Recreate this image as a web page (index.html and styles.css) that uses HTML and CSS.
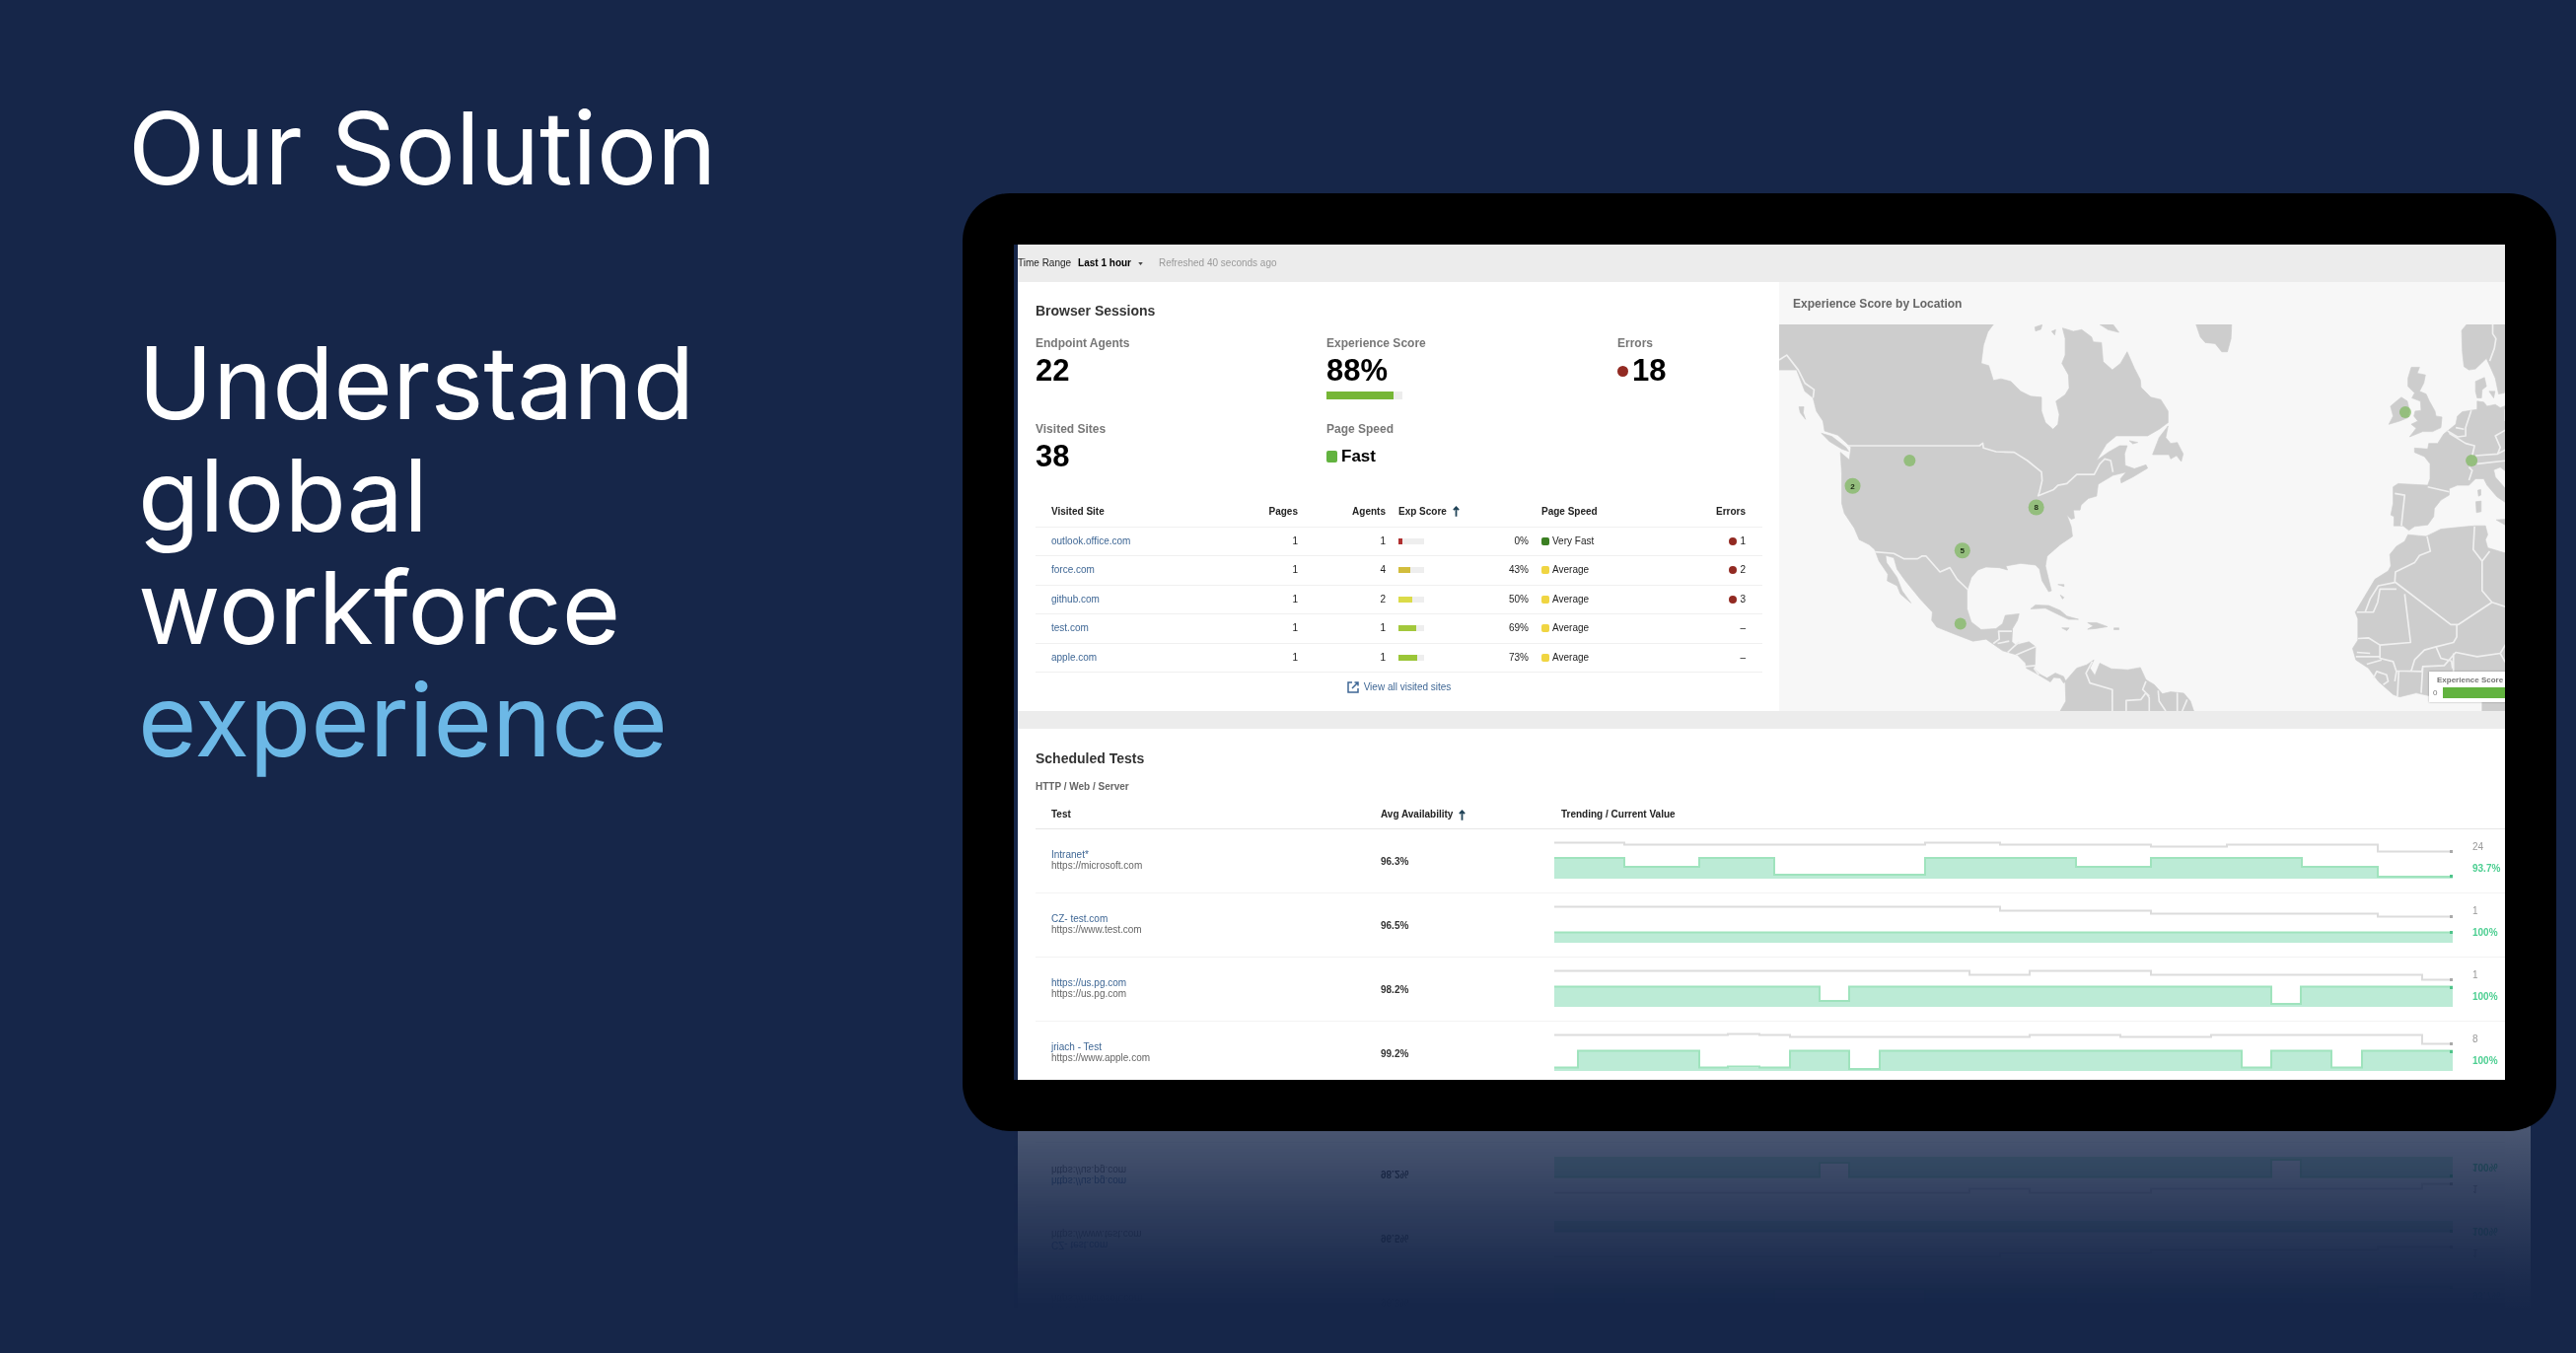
FILE: index.html
```html
<!DOCTYPE html>
<html lang="en">
<head>
<meta charset="utf-8">
<title>Our Solution</title>
<meta name="viewport" content="width=device-width, initial-scale=1">
<link rel="stylesheet" href="styles.css">
</head>
<body>
<main class="slide">
  <section class="pitch">
    <h1 class="pitch-title">Our Solution</h1>
    <p class="pitch-text">Understand<br>global<br>workforce<br><em class="pitch-accent">experience</em></p>
  </section>

  <div class="device">
    <div class="screen">
      <header class="toolbar">
        <button class="range" type="button"><span>Time Range</span> <b>Last 1 hour</b>
          <svg class="caret" viewBox="0 0 6 4" aria-hidden="true"><path d="M0 0h6L3 4z"/></svg>
        </button>
        <span class="refreshed">Refreshed 40 seconds ago</span>
      </header>

      <div class="overview">
        <section class="sessions">
          <h2 class="heading">Browser Sessions</h2>
          <dl class="stats">
            <div><dt>Endpoint Agents</dt><dd>22</dd></div>
            <div><dt>Experience Score</dt><dd>88%<span class="score"><span class="score-fill" style="width:88%"></span></span></dd></div>
            <div><dt>Errors</dt><dd class="with-mark"><i class="dot"></i>18</dd></div>
            <div><dt>Visited Sites</dt><dd>38</dd></div>
            <div><dt>Page Speed</dt><dd class="with-mark speed"><i class="chip chip-fast"></i>Fast</dd></div>
          </dl>
          <table class="sites">
            <colgroup><col><col class="c-pages"><col class="c-agents"><col class="c-score"><col class="c-speed"><col class="c-errors"></colgroup>
            <thead>
              <tr><th>Visited Site</th><th class="num">Pages</th><th class="num">Agents</th><th class="gap"><button class="sort" type="button">Exp Score <svg class="arrow" viewBox="0 0 8 12" aria-hidden="true"><path d="M4 12V1.500M1 4.500L4 1.300 7 4.500"/></svg></button></th><th class="gap">Page Speed</th><th class="num last">Errors</th></tr>
            </thead>
            <tbody>
              <tr><td><a href="#">outlook.office.com</a></td><td class="num">1</td><td class="num">1</td><td class="gap"><div class="exp"><span class="mini"><span class="mini-fill" style="width:15%;background:#b03030"></span></span>0%</div></td><td class="gap"><i class="chip chip-very"></i>Very Fast</td><td class="num last"><i class="dot"></i>1</td></tr>
              <tr><td><a href="#">force.com</a></td><td class="num">1</td><td class="num">4</td><td class="gap"><div class="exp"><span class="mini"><span class="mini-fill" style="width:46%;background:#d2bd3c"></span></span>43%</div></td><td class="gap"><i class="chip chip-avg"></i>Average</td><td class="num last"><i class="dot"></i>2</td></tr>
              <tr><td><a href="#">github.com</a></td><td class="num">1</td><td class="num">2</td><td class="gap"><div class="exp"><span class="mini"><span class="mini-fill" style="width:52%;background:#dbdb48"></span></span>50%</div></td><td class="gap"><i class="chip chip-avg"></i>Average</td><td class="num last"><i class="dot"></i>3</td></tr>
              <tr><td><a href="#">test.com</a></td><td class="num">1</td><td class="num">1</td><td class="gap"><div class="exp"><span class="mini"><span class="mini-fill" style="width:70%;background:#a3c83c"></span></span>69%</div></td><td class="gap"><i class="chip chip-avg"></i>Average</td><td class="num last">–</td></tr>
              <tr><td><a href="#">apple.com</a></td><td class="num">1</td><td class="num">1</td><td class="gap"><div class="exp"><span class="mini"><span class="mini-fill" style="width:74%;background:#9bc638"></span></span>73%</div></td><td class="gap"><i class="chip chip-avg"></i>Average</td><td class="num last">–</td></tr>
            </tbody>
          </table>
          <a class="view-all" href="#"><svg class="ext" viewBox="0 0 12 12" aria-hidden="true"><path d="M5 1H1v10h10V7M7.500 1H11v3.500M11 1L5 7"/></svg>View all visited sites</a>
        </section>

        <section class="geo">
          <h2 class="geo-title">Experience Score by Location</h2>
          <div class="map">
            <svg class="map-art" viewBox="72 267 2208 1173" preserveAspectRatio="xMinYMin slice" role="img" aria-label="Map of experience score by location">
              <g class="land">
                <path d="M72 267H722L705 290 692 330 685 385 708 392 722 437 745 432 775 440 805 470 835 485 868 488V530L880 565 903 585 918 570 922 540 912 500 940 480 952 460 950 420 930 385 940 360V310L932 278 965 288 990 283 1020 305 1025 320 1050 322 1055 380 1083 405 1108 385 1128 350 1150 400 1168 435 1170 458 1200 488 1230 495 1252 530V565L1225 585 1190 605H1095L1065 630 1035 680 1070 655 1105 635H1128L1120 660 1122 695 1150 705 1185 693 1190 703 1145 730 1110 748 1108 735 1125 715 1085 725 1060 740 1040 752 1035 788 1010 795 988 815 985 830 965 830 968 855 958 858 945 845 958 880 962 910 925 935 885 970 880 1000 898 1075 890 1078 870 1045 862 1010 850 997 805 992 760 1000 765 1012 740 1005 700 1003 675 1012 655 1035 642 1075V1130L655 1170 685 1193 730 1190 750 1175 758 1150 800 1145 795 1165 780 1190 778 1230 790 1240 830 1230 850 1245 848 1300 845 1310 862 1328 885 1340 910 1325 935 1335 942 1350 935 1355 925 1340 905 1338 895 1352 850 1325 822 1310 820 1295 795 1270 750 1257 700 1222 660 1228 600 1205 550 1185 535 1165 537 1140 500 1100 455 1045 430 1010 420 975 395 968 398 990 430 1035 445 1075 472 1112 440 1085 430 1060 400 1045 402 1025 375 985 362 950 345 935 315 920 300 885 270 840 262 810V720L258 655 285 678 290 640 275 625 250 603 210 590 205 560 185 530 175 490 150 470 125 405H72Z"/>
                <path d="M200 597 232 607 275 640 283 652 262 645 225 622ZM132 517H147L145 535 152 555 136 535ZM848 275 870 268 866 282 850 287ZM899 288 911 283 908 299ZM1045 267H1085L1103 291 1070 283ZM835 1130 850 1118 890 1120 925 1135 945 1152 980 1162 950 1162 915 1145 880 1128ZM1008 1172 1035 1172 1068 1184 1032 1190 1008 1192 1025 1182ZM930 1188H952L945 1196ZM1088 1188H1103V1193H1088ZM918 1056H936V1062ZM925 1088 936 1095 932 1100ZM1135 620 1160 625 1145 629Z"/>
                <path d="M925 1440 942 1410 940 1350 975 1310 1005 1300 1027 1285 1015 1310 1030 1332 1045 1295 1080 1312 1130 1315 1168 1308 1185 1345 1210 1360 1235 1388 1260 1382 1300 1386 1320 1410 1330 1440Z"/>
                <g transform="translate(1200 0)">
                  <path d="M137 267H245L243 310 232 350H215L195 325 165 322 150 305ZM52 575 45 610 60 628 80 625 98 660 92 683 78 665 60 675 55 662H5L25 610Z"/>
                  <path d="M790 397H815L808 415 833 420 828 445 815 470 835 478 845 500 862 530 865 545 883 548 880 580 855 592H825L785 608 805 582 790 570 810 560 798 545 802 530 820 528 818 500 792 490 800 475 780 455V430ZM760 488 778 500 785 530 780 550 755 560 722 570 735 545 727 515 745 500Z"/>
                  <path d="M800 642 840 645 843 628 870 628 888 600 925 570 930 545 945 532 990 525V500L1010 503 1020 515 1045 510 1060 520 1080 512V715L1060 700 1040 708 1045 730 1080 770V810L1050 790 1020 755 1010 735H985L965 755H930L905 765V785L880 800 860 825 858 850 840 875 800 880 783 892 765 878H737L738 850 728 845 735 810V760L750 750 840 755 847 735V690L830 668 800 655Z"/>
                  <path d="M985 440 1012 428 1018 455 1005 465 1003 490H990L985 470ZM1026 470H1044L1040 490ZM992 770 1001 768V785L994 788ZM986 805 1002 803V835L988 838ZM1048 860 1080 858V878Z"/>
                  <path d="M943 285 958 267H1080V450L1072 475 1055 478 1045 430 1025 385 1018 370 985 402 965 405 950 395 945 350Z"/>
                  <path d="M780 905 835 910 880 888 960 880 985 878H1015L1022 905 1015 920 1022 945 1080 962V1440H1005V1400L850 1395 805 1385 755 1397 735 1390 690 1350 660 1310 622 1285 612 1250 628 1225V1160L620 1140 650 1090 680 1040 720 1015 728 1000 725 965 745 940 770 925Z"/>
                </g>
              </g>
              <g class="borders">
                <path d="M72 375 95 360 130 405 150 445 178 465 175 490M280 635H680L690 627 692 642 730 653 785 655 825 680 868 715 870 740 862 775 858 787 905 768 918 755 945 750 975 722H1028L1045 690 1060 675 1078 680 1085 715M362 957 420 962 450 978H492L505 970H518L560 1018 590 1005 612 1040 645 1072M722 1235 740 1222 738 1198 778 1198M735 1235 770 1228M765 1262 800 1230M790 1270 850 1245M820 1305 850 1302M845 1310 860 1330"/>
                <path d="M1022 1290 1003 1325 1015 1355 1083 1375V1440M1125 1440V1408L1170 1405 1185 1385 1195 1400V1440M1185 1350 1175 1375 1195 1395M1222 1378 1225 1410 1245 1440M1280 1385V1440M1310 1405 1295 1440"/>
                <g transform="translate(1200 0)">
                  <path d="M1037 267V295L1047 310 1042 340 1028 378M972 528 955 580 955 605 930 608 900 590M905 597 955 628 982 635 975 665M925 580 950 585M985 665 1052 660 1060 640 1045 605 1080 585M1052 660 1080 645M990 690 1080 680M965 700 975 710 965 740M840 760 905 775M740 780 770 785 765 830 760 878M1075 525V560"/>
                  <path d="M838 910 848 955 815 968 800 990 742 1018 740 1048 910 1178H932L1035 1110 1005 1075V985L978 950 982 880M1005 985 1028 955M1035 1110 1080 1125M745 1070H695L688 1110 675 1140H625M650 1140 665 1100 690 1060 740 1050M770 1085 788 1232 695 1240 660 1218 628 1220M695 1240V1280L735 1290 745 1320 740 1350M622 1275H695M625 1262 665 1265M790 1318 800 1285 830 1255 865 1245 918 1232 928 1215V1180M865 1245 880 1280 912 1288 915 1310M745 1318 822 1320 825 1305 890 1302 925 1262 990 1275 1060 1265 1078 1235M1060 1265 1080 1300M825 1305 820 1385M655 1298 700 1285M675 1340 685 1320 715 1330 720 1350 705 1360M752 1320 748 1395M918 1265V1320"/>
                </g>
              </g>
              <g class="pins">
                <circle cx="295" cy="757" r="24"/><circle cx="852" cy="822" r="24"/><circle cx="628" cy="953" r="24"/>
                <circle cx="468" cy="680" r="18"/><circle cx="622" cy="1175" r="18"/><circle cx="1972" cy="533" r="18"/><circle cx="2173" cy="680" r="18"/>
              </g>
              <g class="pin-count"><text x="295" y="766">2</text><text x="852" y="831">8</text><text x="628" y="962">5</text></g>
            </svg>
            <div class="legend"><b class="legend-title">Experience Score</b><span>0</span><i class="legend-bar"></i></div>
          </div>
        </section>
      </div>

      <section class="tests">
        <h2 class="heading">Scheduled Tests</h2>
        <h3 class="subheading">HTTP / Web / Server</h3>
        <table class="trend">
          <colgroup><col class="c-test"><col class="c-avail"><col><col class="c-value"></colgroup>
          <thead><tr><th class="inset">Test</th><th><button class="sort" type="button">Avg Availability <svg class="arrow" viewBox="0 0 8 12" aria-hidden="true"><path d="M4 12V1.500M1 4.500L4 1.300 7 4.500"/></svg></button></th><th class="trend-head" colspan="2">Trending / Current Value</th></tr></thead>
          <tbody>
            <tr><td class="inset test"><a href="#">Intranet*</a><br>https://microsoft.com</td><td class="avail">96.3%</td>
              <td><svg class="chart" viewBox="0 0 911 56" preserveAspectRatio="none" aria-hidden="true">
                <path class="area" d="M0 50V29H71V38H147V29H223V46H376V29H529V38H605V29H758V38H835V48H911V50Z"/>
                <path class="edge" d="M0 29H71V38H147V29H223V46H376V29H529V38H605V29H758V38H835V48H911"/>
                <path class="load" d="M0 13.500H71V15.500H376V13.500H452V15.500H605V17.500H682V15.500H835V22.500H911"/>
                <path class="end-load" d="M908 21h3v3h-3z"/><path class="end" d="M908 46h3v3h-3z"/></svg></td>
              <td class="value"><span>24</span><b>93.7%</b></td></tr>
            <tr><td class="inset test"><a href="#">CZ- test.com</a><br>https://www.test.com</td><td class="avail">96.5%</td>
              <td><svg class="chart" viewBox="0 0 911 56" preserveAspectRatio="none" aria-hidden="true">
                <path class="area" d="M0 50V39H911V50Z"/><path class="edge" d="M0 39.500H911"/>
                <path class="load" d="M0 13.500H452V17.500H605V20.500H835V23.500H911"/>
                <path class="end-load" d="M908 22h3v3h-3z"/><path class="end" d="M908 38h3v3h-3z"/></svg></td>
              <td class="value"><span>1</span><b>100%</b></td></tr>
            <tr><td class="inset test"><a href="#">https://us.pg.com</a><br>https://us.pg.com</td><td class="avail">98.2%</td>
              <td><svg class="chart" viewBox="0 0 911 56" preserveAspectRatio="none" aria-hidden="true">
                <path class="area" d="M0 50V29.500H269V44H299V29.500H727V47H757V29.500H911V50Z"/>
                <path class="edge" d="M0 29.500H269V44H299V29.500H727V47H757V29.500H911"/>
                <path class="load" d="M0 13.500H421V17.500H482V13.500H605V17.500H880V22.500H911"/>
                <path class="end-load" d="M908 21h3v3h-3z"/><path class="end" d="M908 29h3v3h-3z"/></svg></td>
              <td class="value"><span>1</span><b>100%</b></td></tr>
            <tr><td class="inset test"><a href="#">jriach - Test</a><br>https://www.apple.com</td><td class="avail">99.2%</td>
              <td><svg class="chart" viewBox="0 0 911 56" preserveAspectRatio="none" aria-hidden="true">
                <path class="area" d="M0 50V46.500H24V29.500H147V46.500H239V29.500H299V48H330V29.500H697V46.500H727V29.500H788V46.500H819V29.500H911V50Z"/>
                <path class="edge" d="M0 46.500H24V29.500H147V46.500H176V45.500H208V46.500H239V29.500H299V48H330V29.500H697V46.500H727V29.500H788V46.500H819V29.500H911"/>
                <path class="load" d="M0 13.500H176V12.500H208V13.500H239V15.500H482V13.500H574V15.500H666V13.500H880V22.500H911"/>
                <path class="end-load" d="M908 21h3v3h-3z"/><path class="end" d="M908 29h3v3h-3z"/></svg></td>
              <td class="value"><span>8</span><b>100%</b></td></tr>
          </tbody>
        </table>
      </section>
    </div>
  </div>
</main>
</body>
</html>
```
FILE: styles.css
```css
* { box-sizing: border-box; }

body {
  margin: 0;
  min-height: 100vh;
  background: #162649;
  color: #222;
  font-family: "Liberation Sans", Arial, sans-serif;
  font-size: 10px;
  line-height: 12px;
}

h1, h2, h3, p, dl, dd { margin: 0; }
button { padding: 0; border: 0; background: none; color: inherit; font: inherit; cursor: pointer; }
a { color: #3f6795; text-decoration: none; }
svg { display: block; }
table { width: 100%; border-collapse: collapse; table-layout: fixed; }
th, td { padding: 0; text-align: left; }

.slide {
  display: grid;
  grid-template-columns: 976px minmax(0, 1fr);
  align-items: start;
  padding-right: 20px;
  isolation: isolate;
}

/* Left-hand message */
.pitch { padding: 93px 0 0 130px; color: #fff; font-family: Inter, "Liberation Sans", sans-serif; }
.pitch-title, .pitch-text { font-size: 102px; font-weight: 400; line-height: 114px; }
.pitch-text { margin-top: 124px; padding-left: 10px; }
.pitch-accent { color: #6cb8e6; font-style: normal; }

/* Device frame and its reflection on the floor */
.device {
  position: relative;
  margin-top: 196px;
  padding: 52px;
  border-radius: 48px;
  background: #000;
}
.device::after {
  content: "";
  position: absolute;
  z-index: -1;
  right: 26px;
  top: calc(100% - 12px);
  width: 26px;
  height: 194px;
  background: linear-gradient(rgba(255,255,255,.22) 12px, rgba(255,255,255,.107) 93px, rgba(255,255,255,.06) 133px, rgba(255,255,255,.026) 159px, transparent);
}
.screen {
  border-left: 4px solid #162649;
  background: #fff;
  -webkit-box-reflect: below 4px linear-gradient(to top, transparent 48px, rgba(0,0,0,.22) 48px, rgba(0,0,0,.107) 129px, rgba(0,0,0,.06) 169px, rgba(0,0,0,.026) 195px, transparent 230px);
}

.toolbar { display: flex; align-items: center; gap: 16px; height: 38px; background: #ececec; }
.range { display: flex; align-items: center; gap: 7px; color: #222; }
.range b { color: #000; }
.caret { width: 5px; height: 3px; fill: #444; }
.refreshed { color: #999; }

.overview { display: grid; grid-template-columns: 772fr 736fr; border-bottom: 18px solid #ececec; }
.heading { color: #333; font-size: 14px; line-height: 16px; }

/* Browser sessions */
.sessions { padding: 21px 17px 18px 18px; }
.stats { display: grid; grid-template-columns: 295px 295px 1fr; row-gap: 23px; margin-top: 18px; }
.stats dt { margin-bottom: 5px; color: #777; font-size: 12px; font-weight: 700; line-height: 14px; }
.stats dd { color: #000; font-size: 31px; font-weight: 700; line-height: 32px; }
.with-mark { display: flex; align-items: center; gap: 4px; }
.with-mark .dot { width: 11px; height: 11px; margin: 0; }
.with-mark .chip { width: 11px; height: 12px; margin: 0; }
.stats .speed { font-size: 17px; }
.score { display: block; width: 77px; height: 8px; margin-top: 5px; background: #ececec; }
.score-fill { display: block; height: 8px; background: #76b636; }
.dot { display: inline-block; width: 8px; height: 8px; margin-right: 3px; border-radius: 50%; background: #922a22; vertical-align: -1px; }
.chip { display: inline-block; width: 8px; height: 8px; margin-right: 3px; border-radius: 2px; vertical-align: -1px; }
.chip-fast { background: #62b33f; }
.chip-very { background: #3b7f22; }
.chip-avg { background: #f0d542; }

.sites { height: 178px; margin-top: 25px; }
.sites tr { border-bottom: 1px solid #f0f0f0; }
.sites th, .sites td { height: 29px; }
.sites thead th { height: 30px; }
.sites th:first-child, .sites td:first-child { padding-left: 16px; }
.sites .num { text-align: right; }
.sites .gap { padding-left: 13px; }
.sites .last { padding-right: 17px; }
.c-pages { width: 76px; }
.c-agents { width: 89px; }
.c-score { width: 145px; }
.c-speed { width: 150px; }
.c-errors { width: 87px; }
.exp { display: flex; align-items: center; justify-content: space-between; }
.mini { width: 26px; height: 6px; background: #eee; }
.mini-fill { display: block; height: 6px; }
.sort { display: inline-flex; align-items: center; gap: 6px; font-weight: 700; }
.arrow { width: 7px; height: 11px; fill: none; stroke: #1f4256; stroke-width: 2; }
.view-all { display: flex; align-items: center; justify-content: center; gap: 5px; margin-top: 9px; }
.ext { width: 12px; height: 12px; fill: none; stroke: #3f6795; stroke-width: 1.5; }

/* Map */
.geo { display: flex; flex-direction: column; min-width: 0; background: #f7f7f7; }
.geo-title { padding: 15px 14px 14px; color: #666; font-size: 12px; line-height: 14px; }
.map { position: relative; flex: 1; min-height: 0; overflow: hidden; }
.map-art { position: absolute; inset: 0; width: 100%; height: 100%; }
.land { fill: #cdcdcd; stroke: #cdcdcd; stroke-width: 2; stroke-linejoin: round; }
.borders { fill: none; stroke: #f0f0f0; stroke-width: 5; stroke-linejoin: round; }
.pins { fill: #74b552; fill-opacity: .65; }
.pin-count { fill: #1c2b14; font-size: 24px; font-weight: 700; text-anchor: middle; }
.legend {
  position: absolute;
  right: -60px;
  bottom: 9px;
  display: grid;
  grid-template-columns: 10px 110px;
  row-gap: 2px;
  width: 137px;
  padding: 4px;
  background: #fff;
  box-shadow: 0 0 2px rgba(0,0,0,.3);
  color: #777;
  font-size: 8px;
  line-height: 11px;
}
.legend-title { grid-column: 1 / -1; padding-left: 4px; line-height: 10px; }
.legend-bar { height: 11px; background: #62b33f; }

/* Scheduled tests */
.tests { padding: 22px 0 0 18px; }
.subheading { margin-top: 15px; color: #666; font-size: 10px; line-height: 12px; }
.c-test { width: 350px; }
.c-avail { width: 176px; }
.c-value { width: 53px; }
.trend thead th { height: 36px; padding-top: 16px; vertical-align: top; }
.trend thead tr { border-bottom: 1px solid #e6e6e6; }
.trend tbody tr { height: 65px; border-bottom: 1px solid #f3f3f3; }
.trend tbody tr:last-child { height: 60px; border-bottom: 0; }
.trend td { vertical-align: top; }
.trend .inset { padding-left: 16px; }
.trend .trend-head { padding-left: 7px; }
.trend .test { padding-top: 20px; color: #666; line-height: 11px; }
.trend .avail { padding-top: 27px; color: #333; font-weight: 700; }
.trend .value { padding: 12px 0 0 20px; color: #999; }
.value span, .value b { display: block; }
.value b { margin-top: 10px; color: #4dcf92; }
.chart { width: 100%; height: 56px; }
.area { fill: #bcebd6; }
.edge { fill: none; stroke: #9fe3bd; stroke-width: 2; }
.load { fill: none; stroke: #dcdcdc; stroke-width: 2; }
.end { fill: #4fc48a; }
.end-load { fill: #aaa; }
```
